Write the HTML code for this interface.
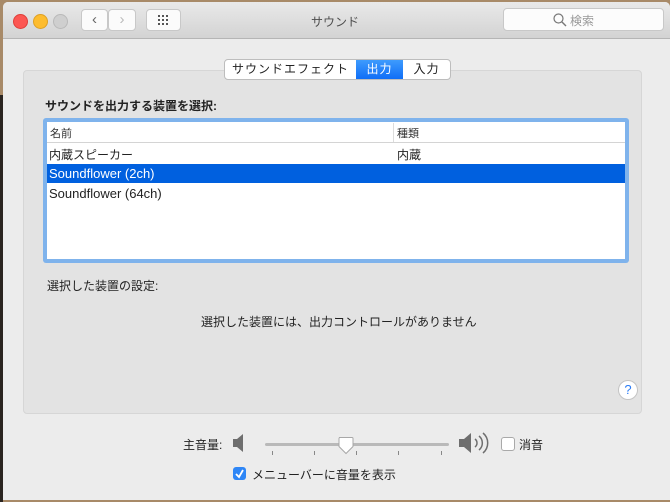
<!DOCTYPE html>
<html><head><meta charset="utf-8"><style>
body{margin:0;width:670px;height:502px;background:#a88a68;position:relative;overflow:hidden;font-family:"Liberation Sans","Noto Sans CJK JP",sans-serif;font-size:12px;color:#222}
.abs{position:absolute}
#leftdark{left:0;top:95px;width:3px;height:407px;background:#2a2420}
#win{left:3px;top:2px;width:667px;height:498px;background:#ececec;border-radius:5px 5px 0 0}
#title{left:3px;top:2px;width:667px;height:36px;background:linear-gradient(#e9e9e9,#d3d3d3);border-bottom:1px solid #b5b5b5;border-radius:5px 5px 0 0}
.tl{width:13px;height:13px;border-radius:50%;top:14px}
.btn{background:#fbfbfb;border:1px solid #c8c8c8;border-radius:4px;height:20px;top:9px}
.tab{top:60px;height:19px;line-height:19px;text-align:center;font-size:12px;letter-spacing:1px}
</style></head><body>
<div class="abs" id="leftdark"></div>
<div class="abs" id="win"></div>
<div class="abs" id="title"></div>
<div class="abs tl" style="left:13px;background:#fc5753;border:0.5px solid #de3f3a"></div>
<div class="abs tl" style="left:33px;background:#fdbc2e;border:0.5px solid #dea023"></div>
<div class="abs tl" style="left:53px;background:#cfcfcf;border:0.5px solid #b9b9b9"></div>
<div class="abs btn" style="left:81px;width:25px;color:#666;text-align:center;line-height:19px;font-size:15px">&#x2039;</div>
<div class="abs btn" style="left:108px;width:26px;color:#bbb;text-align:center;line-height:19px;font-size:15px">&#x203A;</div>
<div class="abs btn" style="left:146px;width:33px">
<svg width="33" height="20" style="position:absolute;left:0;top:0"><g fill="#555">
<rect x="11" y="5" width="2" height="2"/><rect x="15" y="5" width="2" height="2"/><rect x="19" y="5" width="2" height="2"/>
<rect x="11" y="9" width="2" height="2"/><rect x="15" y="9" width="2" height="2"/><rect x="19" y="9" width="2" height="2"/>
<rect x="11" y="13" width="2" height="2"/><rect x="15" y="13" width="2" height="2"/><rect x="19" y="13" width="2" height="2"/></g></svg></div>
<div class="abs" style="left:311px;top:13px;font-size:12px;color:#4d4d4d">サウンド</div>
<div class="abs btn" style="left:503px;width:159px;height:21px;top:8px;background:#fcfcfc">
<svg width="14" height="14" style="position:absolute;left:49px;top:4px"><circle cx="5.5" cy="5.5" r="4.5" fill="none" stroke="#777" stroke-width="1.2"/><line x1="9" y1="9" x2="13" y2="13" stroke="#777" stroke-width="1.4"/></svg>
<span style="position:absolute;left:66px;top:3px;color:#999;font-size:12px">検索</span></div>

<div class="abs" style="left:23px;top:70px;width:617px;height:342px;background:#e3e3e3;border:1px solid #d6d6d6;border-radius:4px"></div>
<div class="abs" style="left:224px;top:59px;width:227px;height:21px;background:#fff;border:1px solid #bdbdbd;border-radius:4px;box-sizing:border-box"></div>
<div class="abs tab" style="left:225px;width:131px;top:60px">サウンドエフェクト</div>
<div class="abs tab" style="left:356px;width:47px;background:linear-gradient(#3e9bfd,#0f6ef7);color:#fff">出力</div>
<div class="abs tab" style="left:403px;width:47px">入力</div>

<div class="abs" style="left:45px;top:97px;font-weight:bold;font-size:12px">サウンドを出力する装置を選択:</div>
<div class="abs" style="left:43px;top:118px;width:586px;height:145px;background:#7fb3ec;border-radius:3px"></div>
<div class="abs" style="left:47px;top:122px;width:578px;height:137px;background:#fff"></div>
<div class="abs" style="left:47px;top:142px;width:578px;height:1px;background:#d4d4d4"></div>
<div class="abs" style="left:393px;top:123px;width:1px;height:19px;background:#dcdcdc"></div>
<div class="abs" style="left:50px;top:125px;font-size:11px;color:#333">名前</div>
<div class="abs" style="left:397px;top:125px;font-size:11px;color:#333">種類</div>
<div class="abs" style="left:49px;top:146px;font-size:12px">内蔵スピーカー</div>
<div class="abs" style="left:397px;top:146px;font-size:12px">内蔵</div>
<div class="abs" style="left:47px;top:164px;width:578px;height:19px;background:#0060df"></div>
<div class="abs" style="left:49px;top:166px;font-size:13px;color:#fff">Soundflower (2ch)</div>
<div class="abs" style="left:49px;top:186px;font-size:13px">Soundflower (64ch)</div>

<div class="abs" style="left:47px;top:277px;font-size:12px">選択した装置の設定:</div>
<div class="abs" style="left:201px;top:313px;font-size:12px">選択した装置には、出力コントロールがありません</div>
<div class="abs" style="left:618px;top:380px;width:18px;height:18px;border-radius:50%;background:#fff;border:1px solid #c4c4c4;color:#2b7cf6;text-align:center;line-height:18px;font-size:13px">?</div>

<div class="abs" style="left:183px;top:436px;font-size:12px">主音量:</div>
<svg class="abs" style="left:232px;top:433px" width="14" height="20"><path d="M1 6h4l6-5v18l-6-5H1z" fill="#6e6e6e"/></svg>
<div class="abs" style="left:265px;top:443px;width:184px;height:3px;background:#b9b9b9;border-radius:2px"></div>
<svg class="abs" style="left:265px;top:451px" width="184" height="6"><g stroke="#888"><line x1="7.5" y1="0" x2="7.5" y2="4"/><line x1="49.5" y1="0" x2="49.5" y2="4"/><line x1="91.5" y1="0" x2="91.5" y2="4"/><line x1="133.5" y1="0" x2="133.5" y2="4"/><line x1="176.5" y1="0" x2="176.5" y2="4"/></g></svg>
<svg class="abs" style="left:337px;top:436px" width="18" height="19"><path d="M2 1.5h13a1 1 0 0 1 1 1v8l-7 7-7-7v-8a1 1 0 0 1 1-1z" fill="#fff" stroke="#a8a8a8"/></svg>
<svg class="abs" style="left:458px;top:430px" width="34" height="26"><path d="M1 9h5l7-6v20l-7-6H1z" fill="#6e6e6e"/><g fill="none" stroke="#6e6e6e" stroke-width="1.5"><path d="M17 9a5 5 0 0 1 0 8"/><path d="M21 6a9 9 0 0 1 0 14"/><path d="M25 3a13 13 0 0 1 0 20"/></g></svg>
<div class="abs" style="left:501px;top:437px;width:12px;height:12px;background:#fff;border:1px solid #a9a9a9;border-radius:3px"></div>
<div class="abs" style="left:519px;top:436px;font-size:12px">消音</div>
<div class="abs" style="left:233px;top:467px;width:13px;height:13px;background:#2e86f6;border-radius:3px"><svg width="13" height="13"><path d="M3 7l3 3 4-7" fill="none" stroke="#fff" stroke-width="1.8"/></svg></div>
<div class="abs" style="left:252px;top:466px;font-size:12px">メニューバーに音量を表示</div>
</body></html>
